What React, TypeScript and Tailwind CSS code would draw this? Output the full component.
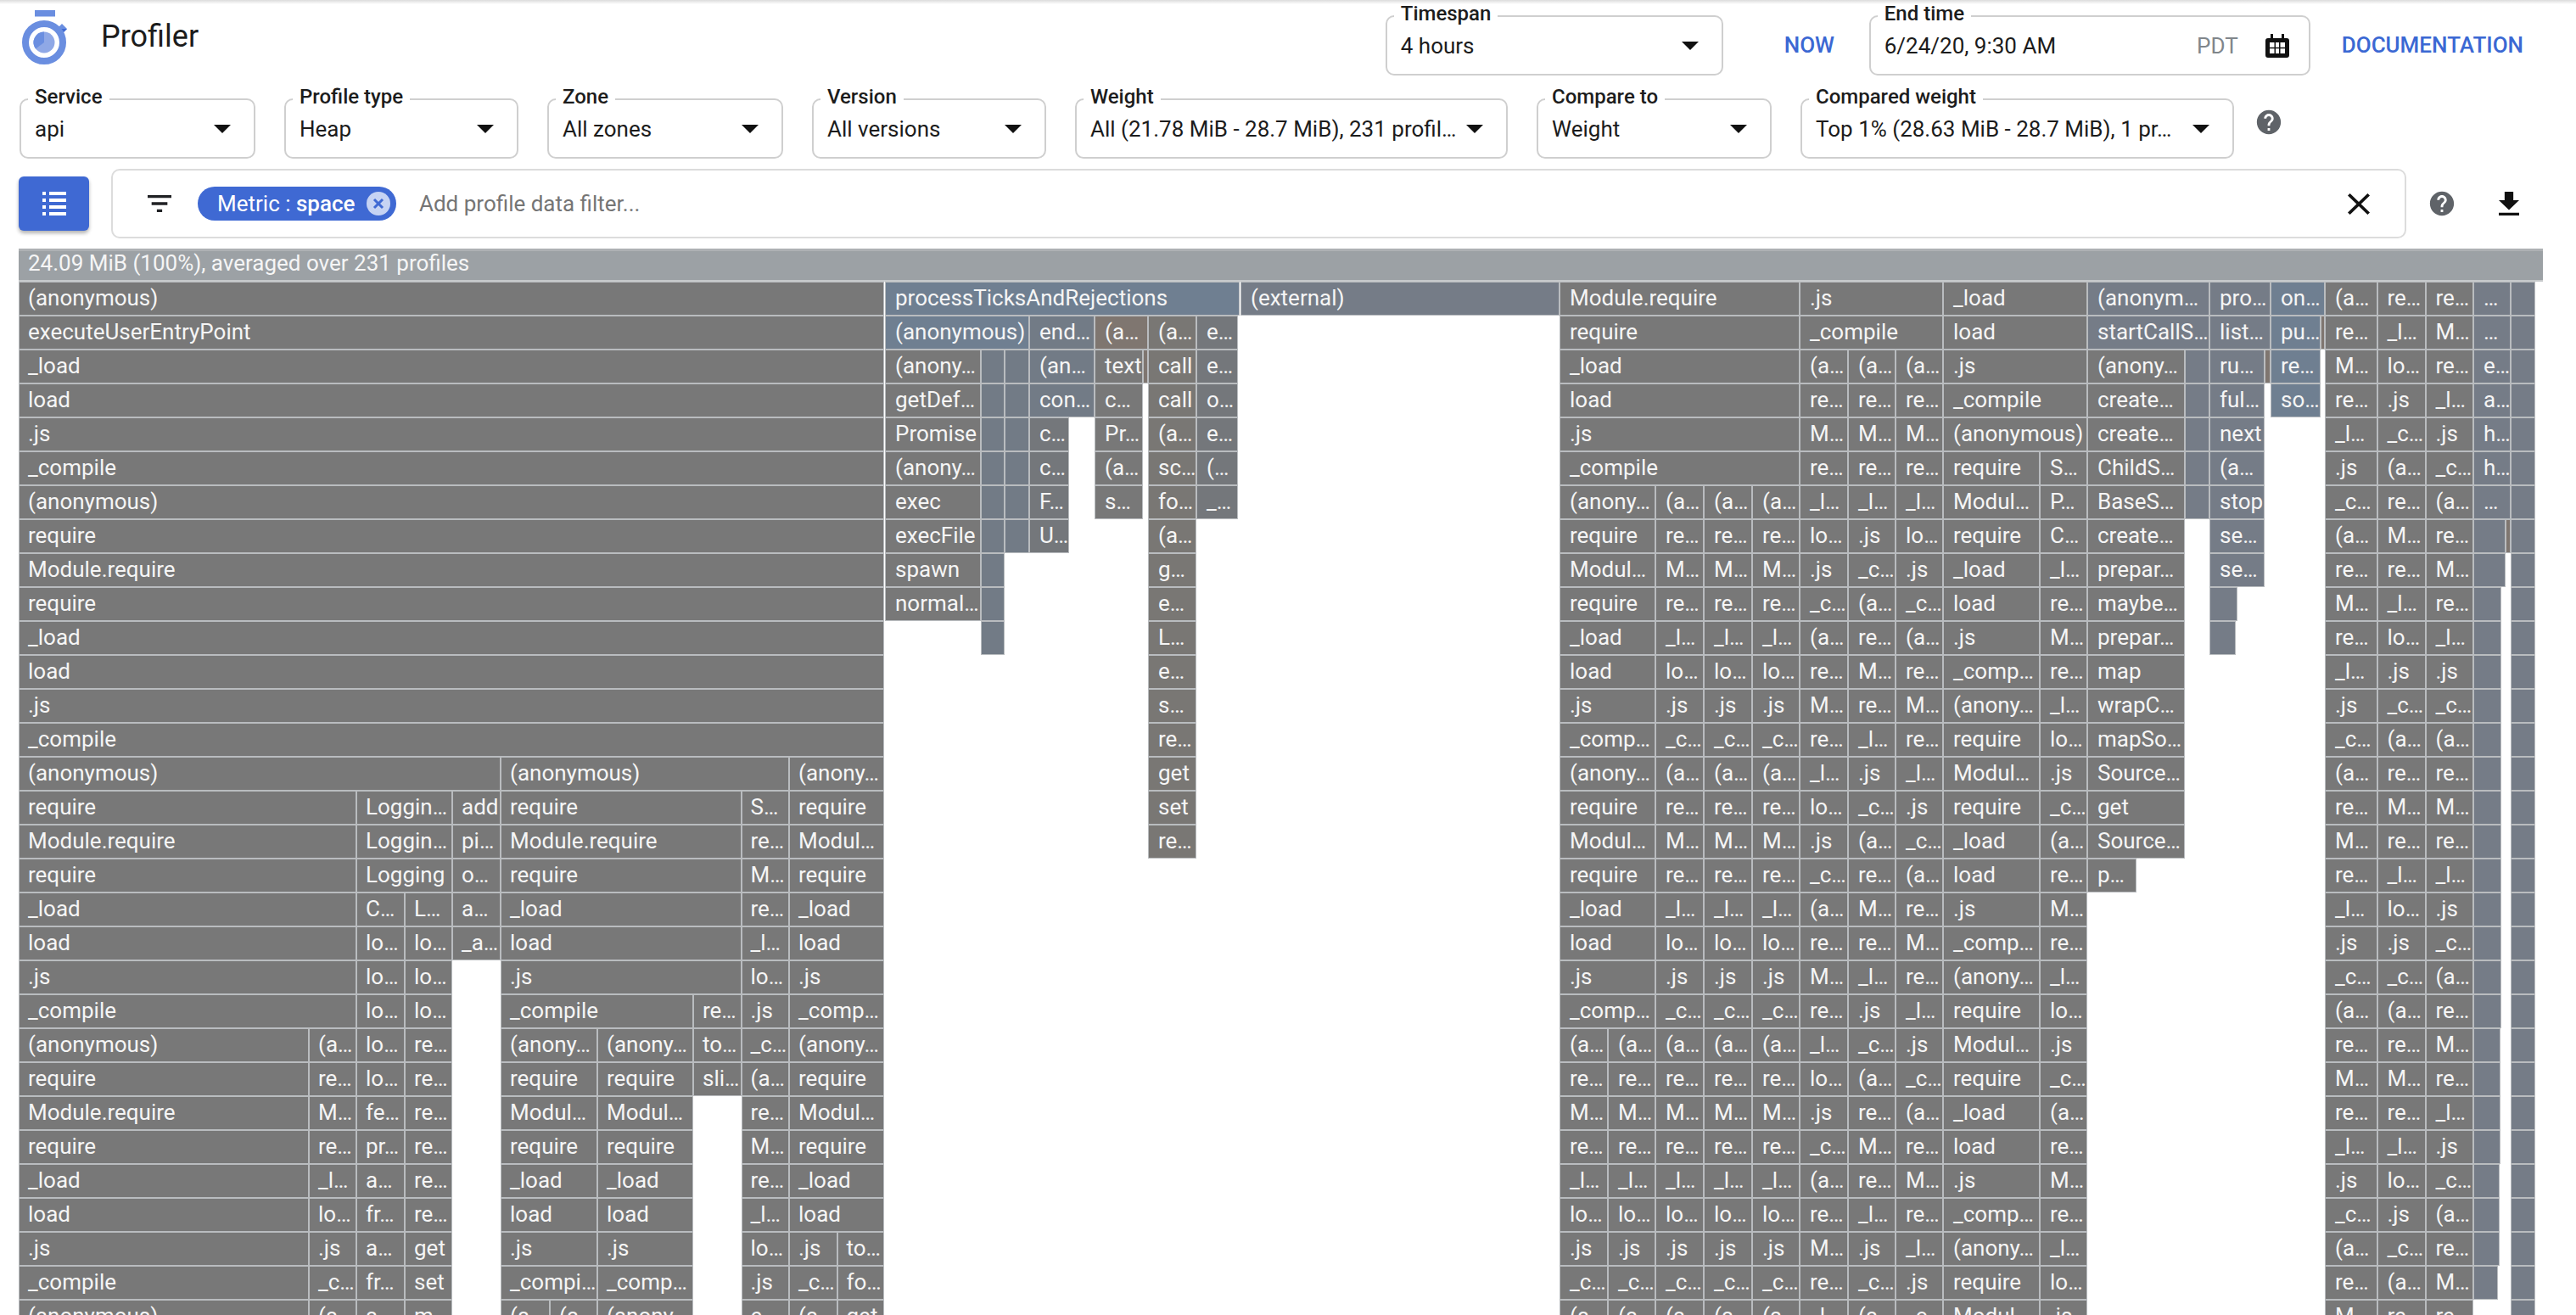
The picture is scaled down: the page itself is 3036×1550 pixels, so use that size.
import React from 'react';

type Tone = 'gray' | 'blue' | 'slate' | 'steel' | 'brown' | 'warm' | 'cool';

interface Cell {
  row: number;
  x0: number;
  x1: number;
  label: string;
  tone: Tone;
}

const toneClass: Record<Tone, string> = {
  gray: 'bg-[#787878]',
  warm: 'bg-[#797774]',
  cool: 'bg-[#74777b]',
  blue: 'bg-[#6f7f91]',
  slate: 'bg-[#727b86]',
  steel: 'bg-[#757c87]',
  brown: 'bg-[#7f7670]',
};

const cells: Cell[] = [];

// one label per row, going down from `from`; "" is a cell with no text
const stack = (x0: number, x1: number, from: number, labels: string, tone: Tone = 'gray') => {
  labels.split('|').forEach((label, i) => {
    cells.push({ row: from + i, x0, x1, label, tone });
  });
};

const P8 = '(a…|re…|M…|re…|_l…|lo…|.js|_c…';
const blanks = (n: number) => new Array(n).fill('').join('|');

// left block
stack(22, 1042, 0, '(anonymous)|executeUserEntryPoint|_load|load|.js|_compile|(anonymous)|require|Module.require|require|_load|load|.js|_compile');
stack(22, 590, 14, '(anonymous)');
stack(590, 930, 14, '(anonymous)');
stack(930, 1042, 14, '(anony…');
stack(22, 420, 15, 'require|Module.require|require|_load|load|.js|_compile');
stack(22, 364, 22, '(anonymous)|require|Module.require|require|_load|load|.js|_compile|(anonymous)');
stack(364, 420, 22, '(a…|re…|M…|re…|_l…|lo…|.js|_c…|(a…');
stack(420, 533, 15, 'Loggin…|Loggin…|Logging');
stack(420, 477, 18, 'C…|lo…|lo…|lo…|lo…|lo…|fe…|pr…|a…|fr…|a…|fr…|a…');
stack(477, 533, 18, 'L…|lo…|lo…|lo…|re…|re…|re…|re…|re…|re…|get|set|m…');
stack(533, 590, 15, 'add|pi…|o…|a…|_a…');
stack(590, 873.5, 15, 'require|Module.require|require|_load|load|.js');
stack(590, 817, 21, '_compile');
stack(817, 873.5, 21, 're…|to…|sli…');
stack(590, 704, 22, '(anony…|require|Modul…|require|_load|load|.js|_compi…');
stack(704, 817, 22, '(anony…|require|Modul…|require|_load|load|.js|_comp…|(anony…');
stack(590, 648, 30, '(a…');
stack(648, 704, 30, '(a…');
stack(873.5, 930, 15, 'S…|re…|M…|re…|_l…|lo…|.js|_c…|(a…|re…|M…|re…|_l…|lo…|.js|e…');
stack(930, 1042, 15, 'require|Modul…|require|_load|load|.js|_comp…|(anony…|require|Modul…|require|_load|load');
stack(930, 986.5, 28, '.js|_c…|(a…');
stack(986.5, 1042, 28, 'to…|fo…|get');

// processTicksAndRejections
stack(1043, 1461, 0, 'processTicksAndRejections', 'blue');
stack(1043, 1213, 1, '(anonymous)', 'blue');
stack(1213, 1290, 1, 'end…', 'slate');
stack(1290, 1353, 1, '(a…', 'brown');
stack(1043, 1156, 2, '(anony…|getDef…|Promise|(anony…|exec|execFile|spawn|normal…');
stack(1156, 1184, 2, blanks(9), 'slate');
stack(1184, 1213, 2, blanks(6), 'slate');
stack(1213, 1290, 2, '(an…|con…', 'slate');
stack(1213, 1260, 4, 'c…|c…|F…|U…', 'cool');
stack(1290, 1347, 2, 'text|c…|Pr…|(a…|s…');
stack(1347, 1353, 2, '', 'brown');
stack(1353, 1410, 1, '(a…|call|call|(a…|sc…|fo…|(a…|g…|e…|L…|e…|s…|re…|get|set|re…', 'warm');
stack(1410, 1459, 1, 'e…|e…|o…|e…|(…|_…', 'cool');

// (external)
stack(1462, 1838, 0, '(external)', 'steel');

// right block
stack(1838, 2121, 0, 'Module.require|require|_load|load|.js|_compile');
stack(1838, 1951, 6, '(anony…|require|Modul…|require|_load|load|.js|_comp…|(anony…|require|Modul…|require|_load|load|.js|_comp…');
stack(1838, 1895, 22, `${P8}|(a…`);
stack(1895, 1951, 22, `${P8}|(a…`);
stack(1951, 2008, 6, `${P8}|${P8}|${P8}|(a…`);
stack(2008, 2065, 6, `${P8}|${P8}|${P8}|(a…`);
stack(2065, 2121, 6, `${P8}|${P8}|${P8}|(a…`);
stack(2121, 2290, 0, '.js|_compile');
stack(2121, 2178, 2, `${P8}|${P8}|${P8}|(a…|re…|M…|re…|_l…`);
stack(2178, 2234, 2, '(a…|re…|M…|re…|_l…|.js|_c…|(a…|re…|M…|re…|_l…|.js|_c…|(a…|re…|M…|re…|_l…|.js|_c…|(a…|re…|M…|re…|_l…|.js|_c…|(a…');
stack(2234, 2290, 2, '(a…|re…|M…|re…|_l…|lo…|.js|_c…|(a…|re…|M…|re…|_l…|.js|_c…|(a…|re…|M…|re…|_l…|.js|_c…|(a…|re…|M…|re…|_l…|.js|_c…');
stack(2290, 2460, 0, '_load|load|.js|_compile|(anonymous)');
stack(2290, 2404, 5, 'require|Modul…|require|_load|load|.js|_comp…|(anony…|require|Modul…|require|_load|load|.js|_comp…|(anony…|require|Modul…|require|_load|load|.js|_comp…|(anony…|require|Modul…');
stack(2404, 2460, 5, 'S…|P…|C…|_l…|re…|M…|re…|_l…|lo…|.js|_c…|(a…|re…|M…|re…|_l…|lo…|.js|_c…|(a…|re…|M…|re…|_l…|lo…|.js');
stack(2460, 2604, 0, '(anonym…|startCallS…', 'steel');
stack(2460, 2575, 2, '(anony…|create…|create…|ChildS…|BaseS…|create…|prepar…|maybe…|prepar…|map|wrapC…|mapSo…|Source…|get|Source…');
stack(2460, 2518, 17, 'p…');
stack(2575, 2604, 2, blanks(5), 'steel');
stack(2604, 2676, 0, 'pro…|list…', 'steel');
stack(2604, 2669, 2, 'ru…|ful…|next|(a…|stop|se…|se…', 'steel');
stack(2669, 2676, 2, '', 'brown');
stack(2604, 2637, 9, '', 'steel');
stack(2604, 2635, 10, '', 'steel');
stack(2676, 2740, 0, 'on…', 'blue');
stack(2676, 2735, 1, 'pu…|re…|so…', 'blue');
stack(2735, 2740, 1, '', 'brown');
stack(2740, 2801.5, 0, '(a…|re…|M…|re…|_l…|.js|_c…|(a…|re…|M…|re…|_l…|.js|_c…|(a…|re…|M…|re…|_l…|.js|_c…|(a…|re…|M…|re…|_l…|.js|_c…|(a…|re…|M…');
stack(2801.5, 2858.5, 0, 're…|_l…|lo…|.js|_c…|(a…|re…|M…|re…|_l…|lo…|.js|_c…|(a…|re…|M…|re…|_l…|lo…|.js|_c…|(a…|re…|M…|re…|_l…|lo…|.js|_c…|(a…|re…');
stack(2858.5, 2915, 0, 're…|M…|re…|_l…|.js|_c…|(a…|re…|M…|re…|_l…|.js|_c…|(a…|re…|M…|re…|_l…|.js|_c…|(a…|re…|M…|re…|_l…|.js|_c…|(a…|re…|M…|re…');
stack(2915, 2959, 0, '…|…|e…|a…|h…|h…|…', 'steel');
stack(2915, 2953, 7, '|', 'steel');
stack(2953, 2959, 7, '', 'brown');
stack(2915, 2948, 9, blanks(13), 'steel');
stack(2915, 2947, 22, blanks(4), 'steel');
stack(2915, 2946, 26, blanks(3), 'steel');
stack(2915, 2944, 29, '', 'steel');
stack(2959, 2988, 0, blanks(31), 'steel');

const rows = Array.from({ length: 31 }, (_, row) =>
  cells.filter((c) => c.row === row).sort((a, b) => a.x0 - b.x0)
);

const Arrow = () => (
  <span className="ml-auto h-0 w-0 shrink-0 border-x-[10px] border-t-[10px] border-x-transparent border-t-[#111]" />
);

const Field = ({ label, width, children }: { label: string; width: string; children: React.ReactNode }) => (
  <fieldset className={`h-[84px] shrink-0 rounded-[10px] border-2 border-[#cfcfcf] ${width}`}>
    <legend className="ml-[8px] px-[8px] pb-[6px] text-[24px] leading-[22px] font-medium text-[#1c1c1c]">{label}</legend>
    <div className="flex items-center pt-[6px] pr-[27px] pl-[16px] text-[26px] leading-[30px] text-[#1c1c1c]">{children}</div>
  </fieldset>
);

const HelpIcon = ({ className }: { className: string }) => (
  <svg viewBox="0 0 24 24" className={`h-[34px] w-[34px] shrink-0 fill-[#5f6368] ${className}`}>
    <path d="M12 2C6.48 2 2 6.48 2 12s4.48 10 10 10 10-4.48 10-10S17.52 2 12 2zm1 17h-2v-2h2v2zm2.07-7.75l-.9.92C13.45 12.9 13 13.5 13 15h-2v-.5c0-1.1.45-2.1 1.17-2.83l1.24-1.26c.37-.36.59-.86.59-1.41 0-1.1-.9-2-2-2s-2 .9-2 2H8c0-2.21 1.79-4 4-4s4 1.79 4 4c0 .88-.36 1.68-.93 2.25z" />
  </svg>
);

const Logo = () => (
  <svg viewBox="0 0 56 68" className="h-[68px] w-[56px] shrink-0">
    <rect x="15" y="0" width="24" height="7.5" fill="#6a8ee0" />
    <path d="M47 16l-6 6 6 6 6-6z" fill="#6a8ee0" />
    <path d="M41 22l6 6 6-6z" fill="#3f69d3" />
    <circle cx="26" cy="38" r="22" fill="none" stroke="#6a8ee0" strokeWidth="8" />
    <circle cx="26" cy="38" r="12.5" fill="#8fa8e6" />
    <path d="M26 38V25.5a12.5 12.5 0 0 0-10 20z" fill="#6a8ee0" />
  </svg>
);

const FlameRow = ({ row }: { row: Cell[] }) => {
  let at = 0;
  return (
    <div className="flex h-[40px]">
      {row.map((c) => {
        const gap = c.x0 - at;
        at = c.x1;
        // blank slivers are narrower than the text padding
        const pad = !c.label ? '' : c.x0 < 1043 ? 'pl-[10px]' : 'pl-[11px]';
        return (
          <React.Fragment key={c.x0}>
            {gap > 0 && <div className="shrink-0" style={{ width: gap }} />}
            <div
              className={`box-border h-[40px] shrink-0 overflow-hidden border border-[#b9bcbf] text-[26px] leading-[37px] whitespace-nowrap text-[#f5f5f5] ${pad} ${toneClass[c.tone]}`}
              style={{ width: c.x1 - c.x0 }}
            >
              {c.label}
            </div>
          </React.Fragment>
        );
      })}
    </div>
  );
};

export default function App() {
  return (
    <div className="h-[1550px] w-full overflow-hidden bg-white font-[family-name:Roboto,sans-serif]">
      <div className="h-[5px] bg-gradient-to-b from-[#dcdcdc] to-white" />

      {/* title row */}
      <div className="flex pr-[62px] pl-[26px]">
        <div className="mt-[7px]">
          <Logo />
        </div>
        <div className="mt-[16px] ml-[37px] text-[36px] leading-[44px] text-[#1c1c1c]">Profiler</div>
        <div className="ml-auto flex">
          <Field label="Timespan" width="w-[398px]">
            4 hours
            <Arrow />
          </Field>
          <div className="mt-[33px] ml-[72px] w-[60px] text-[26px] leading-[30px] font-medium text-[#3b68d3]">NOW</div>
          <div className="ml-[40px]">
            <Field label="End time" width="w-[520px]">
              6/24/20, 9:30 AM
              <span className="ml-auto text-[#80868b]">PDT</span>
              <svg viewBox="0 0 28 28" className="-mr-[4px] ml-[32px] h-[28px] w-[28px] shrink-0">
                <path d="M3 5h3V0h3v5h10V0h3v5h3a3 3 0 0 1 3 3v17a3 3 0 0 1-3 3H3a3 3 0 0 1-3-3V8a3 3 0 0 1 3-3z" fill="#111" />
                <rect x="5" y="10" width="18" height="13" fill="#fff" />
                <path d="M10.5 10h1.5v13h-1.5zM16 10h1.5v13H16zM5 15.7h18v1.6H5z" fill="#111" />
              </svg>
            </Field>
          </div>
          <div className="mt-[33px] ml-[37px] text-[26px] leading-[30px] font-medium text-[#3b68d3]">DOCUMENTATION</div>
        </div>
      </div>

      {/* filter row */}
      <div className="mt-[14px] flex gap-[34px] pl-[23px]">
        <Field label="Service" width="w-[278px]">
          api
          <Arrow />
        </Field>
        <Field label="Profile type" width="w-[276px]">
          Heap
          <Arrow />
        </Field>
        <Field label="Zone" width="w-[278px]">
          All zones
          <Arrow />
        </Field>
        <Field label="Version" width="w-[276px]">
          All versions
          <Arrow />
        </Field>
        <Field label="Weight" width="w-[510px]">
          All (21.78 MiB - 28.7 MiB), 231 profil…
          <Arrow />
        </Field>
        <Field label="Compare to" width="w-[277px]">
          Weight
          <Arrow />
        </Field>
        <Field label="Compared weight" width="w-[511px]">
          Top 1% (28.63 MiB - 28.7 MiB), 1 pr…
          <Arrow />
        </Field>
        <HelpIcon className="mt-[24px] -ml-[10px]" />
      </div>

      {/* profile data filter */}
      <div className="mt-[12px] flex h-[82px] items-center pl-[22px]">
        <button className="flex h-[64px] w-[83px] shrink-0 items-center justify-center rounded-[6px] bg-[#3f69d3] shadow-[0_3px_4px_rgba(0,0,0,0.3)]">
          <svg viewBox="0 0 28 28" className="h-[28px] w-[28px] fill-white">
            <path d="M0 0h4v4H0zM8 0h20v4H8zM0 8h4v4H0zM8 8h20v4H8zM0 16h4v4H0zM8 16h20v4H8zM0 24h4v4H0zM8 24h20v4H8z" />
          </svg>
        </button>
        <div className="ml-[26px] flex h-[82px] w-[2705px] shrink-0 items-center rounded-[10px] border-2 border-[#dcdcdc] pl-[41px]">
          <svg viewBox="3 6 18 12" className="h-[20px] w-[28px] shrink-0 fill-[#202124]" preserveAspectRatio="none">
            <path d="M10 18h4v-2h-4v2zM3 6v2h18V6H3zm3 7h12v-2H6v2z" />
          </svg>
          <div className="ml-[31px] flex h-[40px] w-[234px] shrink-0 items-center rounded-full bg-[#3f69d3] pl-[23px] text-[26px] text-white">
            Metric :&nbsp;<span className="font-medium">space</span>
            <span className="mr-[7px] ml-auto flex h-[28px] w-[28px] items-center justify-center rounded-full bg-[#c6d3f3]">
              <svg viewBox="0 0 14 14" className="h-[14px] w-[14px] stroke-[#3f69d3]" strokeWidth="3">
                <path d="M2 2l10 10M12 2L2 12" />
              </svg>
            </span>
          </div>
          <div className="ml-[27px] text-[26px] text-[#757575]">Add profile data filter...</div>
          <svg viewBox="5 5 14 14" className="mr-[41px] ml-auto h-[25px] w-[26px] shrink-0 fill-[#111]" preserveAspectRatio="none">
            <path d="M19 6.41L17.59 5 12 10.59 6.41 5 5 6.41 10.59 12 5 17.59 6.41 19 12 13.41 17.59 19 19 17.59 13.41 12z" />
          </svg>
        </div>
        <HelpIcon className="ml-[25px]" />
        <svg viewBox="5 3 14 17" className="ml-[50px] h-[28px] w-[24px] shrink-0 fill-[#111]" preserveAspectRatio="none">
          <path d="M19 9h-4V3H9v6H5l7 7 7-7zM5 18v2h14v-2H5z" />
        </svg>
      </div>

      {/* flame graph */}
      <div className="mt-[12px]">
        <div className="ml-[22px] h-[39px] w-[2975px] border-t-[3px] border-b-[2px] border-t-[#aeb1b4] border-b-[#c6c9cb] bg-[#9ca1a5] pl-[11px] text-[26px] leading-[29px] text-[#f5f5f5]">
          24.09 MiB (100%), averaged over 231 profiles
        </div>
        {rows.map((row, i) => (
          <FlameRow key={i} row={row} />
        ))}
      </div>
    </div>
  );
}
